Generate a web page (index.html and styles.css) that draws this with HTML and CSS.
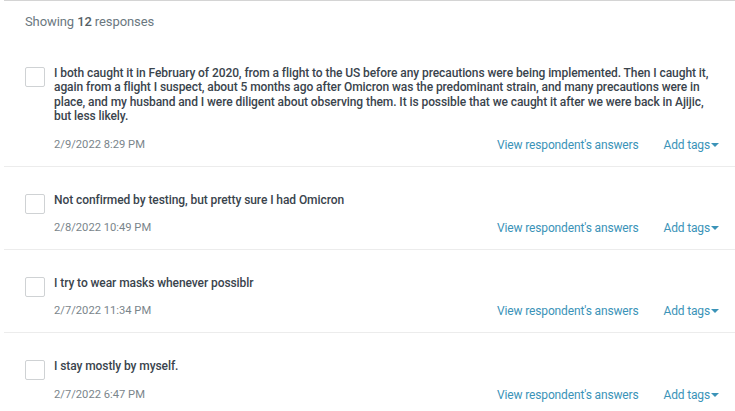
FILE: index.html
```html
<!DOCTYPE html>
<html>
<head>
<meta charset="utf-8">
<link rel="stylesheet" href="styles.css">
</head>
<body>
<div class="panel">
  <div class="summary">Showing <b>12</b> responses</div>
  <div class="responses">
    <div class="row">
      <span class="check"></span>
      <div class="body">
        <p class="answer">I both caught it in February of 2020, from a flight to the US before any precautions were being implemented. Then I caught it, again from a flight I suspect, about 5 months ago after Omicron was the predominant strain, and many precautions were in place, and my husband and I were diligent about observing them. It is possible that we caught it after we were back in Ajijic, but less likely.</p>
        <div class="meta">
          <span class="date">2/9/2022 8:29 PM</span>
          <a class="link view">View respondent's answers</a>
          <a class="link tags">Add tags<span class="caret"></span></a>
        </div>
      </div>
    </div>
    <div class="row">
      <span class="check"></span>
      <div class="body">
        <p class="answer">Not confirmed by testing, but pretty sure I had Omicron</p>
        <div class="meta">
          <span class="date">2/8/2022 10:49 PM</span>
          <a class="link view">View respondent's answers</a>
          <a class="link tags">Add tags<span class="caret"></span></a>
        </div>
      </div>
    </div>
    <div class="row">
      <span class="check"></span>
      <div class="body">
        <p class="answer">I try to wear masks whenever possiblr</p>
        <div class="meta">
          <span class="date">2/7/2022 11:34 PM</span>
          <a class="link view">View respondent's answers</a>
          <a class="link tags">Add tags<span class="caret"></span></a>
        </div>
      </div>
    </div>
    <div class="row">
      <span class="check"></span>
      <div class="body">
        <p class="answer">I stay mostly by myself.</p>
        <div class="meta">
          <span class="date">2/7/2022 6:47 PM</span>
          <a class="link view">View respondent's answers</a>
          <a class="link tags">Add tags<span class="caret"></span></a>
        </div>
      </div>
    </div>
  </div>
</div>
</body>
</html>
```
FILE: styles.css
```css
html, body {
  margin: 0;
  padding: 0;
  background: #ffffff;
}
body {
  font-family: Roboto, "Liberation Sans", sans-serif;
  overflow: hidden;
}
.panel {
  margin-left: 4px;
  border-top: 1px solid #d4d4d4;
}
.summary {
  padding: 13px 0 0 21px;
  height: 39px;
  font-size: 13px;
  line-height: 16px;
  letter-spacing: -0.1px;
  color: #6b787f;
}
.summary b {
  font-weight: 500;
  color: #555f66;
}
.row {
  display: flex;
  align-items: flex-start;
  gap: 9px;
  padding: 14px 16px 13px 21px;
  border-bottom: 1px solid #ececec;
}
.row + .row {
  padding-top: 27px;
}
.check {
  flex: none;
  width: 18px;
  height: 18px;
  border: 1px solid #cfd2d4;
  border-radius: 2px;
  background: #fff;
}
.body {
  flex: 1;
  min-width: 0;
}
.answer {
  margin: -1px 0 0;
  font-size: 12px;
  line-height: 14.4px;
  font-weight: 500;
  letter-spacing: -0.08px;
  color: #3a444d;
}
.meta {
  display: flex;
  align-items: center;
  margin-top: 13px;
  font-size: 12px;
  line-height: 16px;
}
.date {
  flex: 1;
  font-size: 11.2px;
  color: #7a858b;
}
.link {
  color: #3b93b8;
  letter-spacing: -0.15px;
  cursor: pointer;
}
.view {
  margin-right: 25px;
}
.tags {
  display: inline-flex;
  align-items: center;
}
.caret {
  width: 0;
  height: 0;
  margin-left: 1px;
  border-left: 4px solid transparent;
  border-right: 4px solid transparent;
  border-top: 4px solid #3b93b8;
}
```
